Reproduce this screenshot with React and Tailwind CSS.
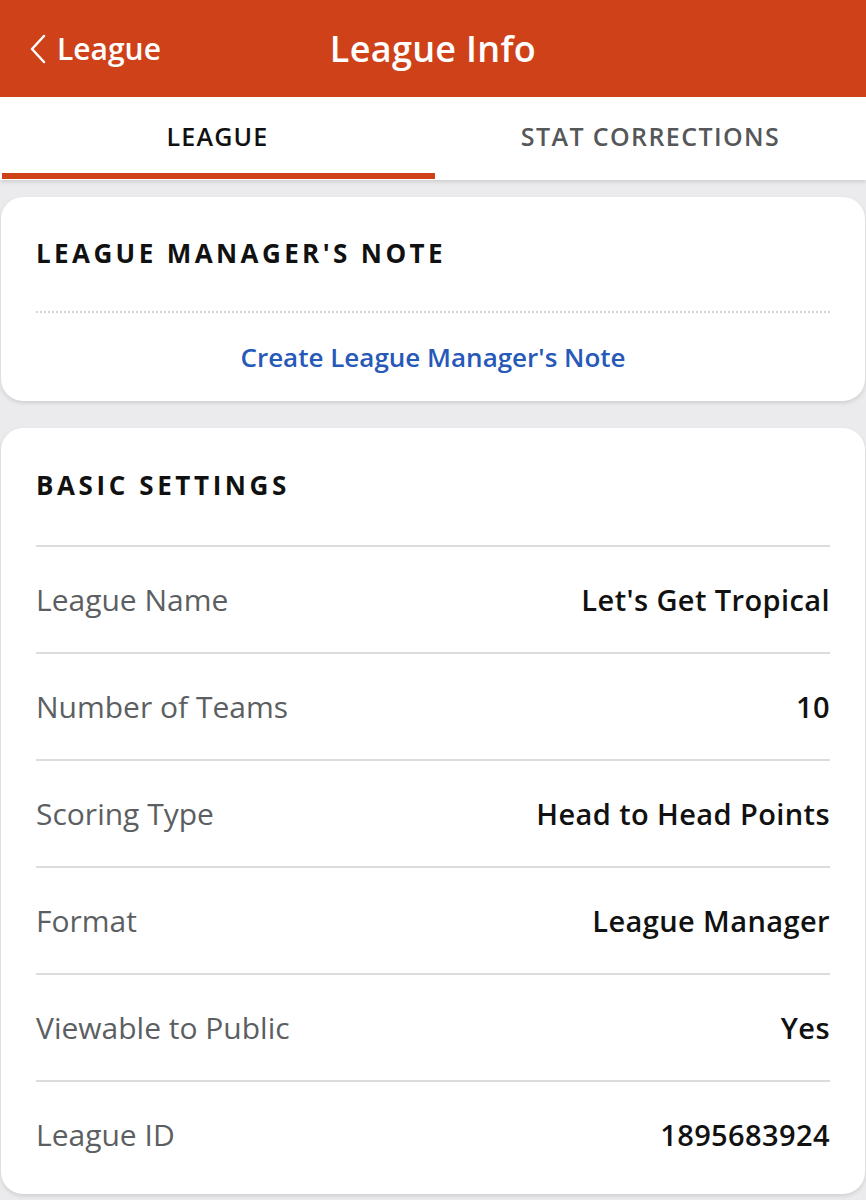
import React from "react";

const rows = [
  ["League Name", "Let's Get Tropical"],
  ["Number of Teams", "10"],
  ["Scoring Type", "Head to Head Points"],
  ["Format", "League Manager"],
  ["Viewable to Public", "Yes"],
  ["League ID", "1895683924"],
];

export default function App() {
  return (
    <div
      className="w-[866px] h-[1200px] bg-[#ebebed] overflow-hidden"
      style={{ fontFamily: "'Open Sans', 'Liberation Sans', sans-serif" }}
    >
      <div className="h-[97px] bg-[#cf4219] flex items-center relative">
        <div className="absolute left-[28px] top-0 h-full flex items-center gap-[9px] text-white">
          <svg width="20" height="30" viewBox="0 0 20 30" fill="none">
            <path d="M16 2 L4 15 L16 28" stroke="white" strokeWidth="2.5" strokeLinecap="round" strokeLinejoin="round" />
          </svg>
          <span className="text-[30px] font-semibold">League</span>
        </div>
        <div className="w-full text-center text-white text-[36px] font-semibold tracking-[0.3px]">League Info</div>
      </div>
      <div className="h-[83px] bg-white flex shadow-[0_2px_4px_rgba(0,0,0,0.12)] relative">
        <div className="w-[435px] flex flex-col">
          <div className="flex-1 flex items-center justify-center pt-[4px] text-[25px] font-semibold tracking-[1.2px] text-[#111]">LEAGUE</div>
          <div className="h-[6px] bg-[#cf4219] ml-[2px] mb-[1px]"></div>
        </div>
        <div className="flex-1 flex flex-col">
          <div className="flex-1 flex items-center justify-center pt-[4px] text-[25px] font-semibold tracking-[1.4px] text-[#555759]">STAT CORRECTIONS</div>
          <div className="h-[7px]"></div>
        </div>
      </div>
      <div className="mx-[1px] mt-[17px] bg-white rounded-[22px] shadow-[0_2px_4px_rgba(0,0,0,0.12)] px-[35px] h-[204px] flex flex-col">
        <div className="pt-[40px] text-[26px] font-bold tracking-[3.4px] text-[#111] leading-[32px] whitespace-nowrap">LEAGUE MANAGER'S NOTE</div>
        <div className="mt-[42px] border-t-2 border-dotted border-[#d4d4d6]"></div>
        <div className="mt-[27px] text-center text-[26px] font-semibold text-[#2659b8] leading-[34px]">Create League Manager's Note</div>
      </div>
      <div className="mx-[1px] mt-[27px] bg-white rounded-[22px] shadow-[0_2px_4px_rgba(0,0,0,0.12)] px-[35px] pb-[7px]">
        <div className="pt-[41px] pb-[44px] text-[26px] font-bold tracking-[3.6px] text-[#111] leading-[32px]">BASIC SETTINGS</div>
        {rows.map(([k, v]) => (
          <div key={k} className="border-t-2 border-[#dcdcde] h-[107px] flex items-center justify-between">
            <span className="text-[30px] text-[#5c5f62]">{k}</span>
            <span className="text-[29px] font-semibold text-[#111] tracking-[0.4px]">{v}</span>
          </div>
        ))}
      </div>
    </div>
  );
}
